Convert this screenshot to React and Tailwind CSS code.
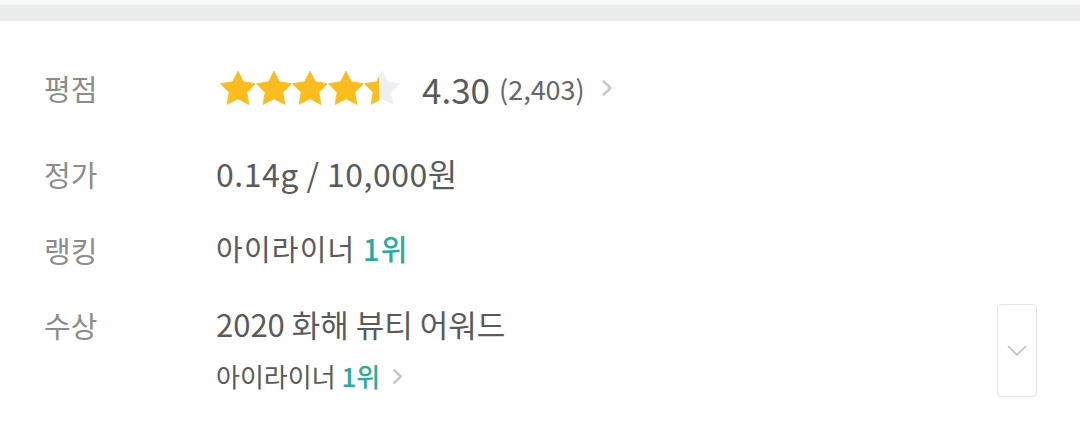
import React from 'react';

const Star = ({ fill = 1, id }) => (
  <svg width="36" height="36" viewBox="0 0 24 24">
    <defs>
      <linearGradient id={id}>
        <stop offset={`${fill * 100}%`} stopColor="#fbbd1d" />
        <stop offset={`${fill * 100}%`} stopColor="#eceff1" />
      </linearGradient>
    </defs>
    <path
      d="M12 0.8L15.6 7.9L23.6 9.1L17.9 14.9L19.2 22.9L12 19.1L4.8 22.9L6.1 14.9L0.4 9.1L8.4 7.9Z"
      fill={`url(#${id})`}
      stroke={`url(#${id})`}
      strokeWidth="0.6"
      strokeLinejoin="round"
    />
  </svg>
);

const Chevron = ({ className }) => (
  <svg className={className} viewBox="0 0 24 24" fill="none" stroke="currentColor" strokeWidth="3.2" strokeLinecap="round" strokeLinejoin="round">
    <path d="M8 4l8 8-8 8" />
  </svg>
);

const Row = ({ label, children, className = '' }) => (
  <div className={`flex ${className}`}>
    <div className="w-[172px] shrink-0 text-[29px] text-[#8c8c8c] leading-none">{label}</div>
    <div className="flex-1">{children}</div>
  </div>
);

export default function App() {
  return (
    <div className="w-[1080px] h-[426px] bg-white overflow-hidden" style={{ fontFamily: '"Noto Sans CJK KR", "Noto Sans", sans-serif' }}>
      <div className="h-[5px] bg-[#f7f8f8]" />
      <div className="h-[16px] bg-[#e9eced]" />
      <div className="pl-[44px] pr-[43px]">
        <Row label="평점" className="mt-[49px] items-center">
          <div className="flex items-center">
            <div className="flex ml-[4px]">
              <Star id="s1" />
              <Star id="s2" />
              <Star id="s3" />
              <Star id="s4" />
              <Star id="s5" fill={0.4} />
            </div>
            <span className="ml-[22px] text-[35px] text-[#5a5a5a] leading-none">4.30</span>
            <span className="ml-[9px] text-[27px] text-[#666] leading-none">(2,403)</span>
            <Chevron className="ml-[12px] w-[20px] h-[20px] text-[#c8c8c8]" />
          </div>
        </Row>
        <Row label="정가" className="mt-[51px] items-center">
          <span className="text-[32px] tracking-[0.5px] text-[#5a5a5a] leading-none">0.14g / 10,000원</span>
        </Row>
        <Row label="랭킹" className="mt-[42px] items-center">
          <span className="text-[29px] tracking-[1.2px] text-[#5a5a5a] leading-none">
            아이라이너 <span className="text-[#27ac9e] font-medium">1위</span>
          </span>
        </Row>
        <Row label="수상" className="mt-[45px]">
          <div className="flex items-start justify-between">
            <div>
              <div className="text-[31px] text-[#5a5a5a] leading-none -mt-[3px]">2020 화해 뷰티 어워드</div>
              <div className="flex items-center mt-[24px]">
                <span className="text-[26px] text-[#5a5a5a] leading-none">
                  아이라이너 <span className="text-[#27ac9e] font-medium">1위</span>
                </span>
                <Chevron className="ml-[8px] w-[19px] h-[19px] text-[#c8c8c8]" />
              </div>
            </div>
            <div className="w-[40px] h-[93px] -mt-[7px] border border-[#e6e6e6] rounded-[4px] flex items-center justify-center">
              <svg width="20" height="12" viewBox="0 0 20 12" fill="none" stroke="#bdbdbd" strokeWidth="1.6" strokeLinecap="round" strokeLinejoin="round">
                <path d="M1.5 1.5l8.5 8.5 8.5-8.5" />
              </svg>
            </div>
          </div>
        </Row>
      </div>
    </div>
  );
}
